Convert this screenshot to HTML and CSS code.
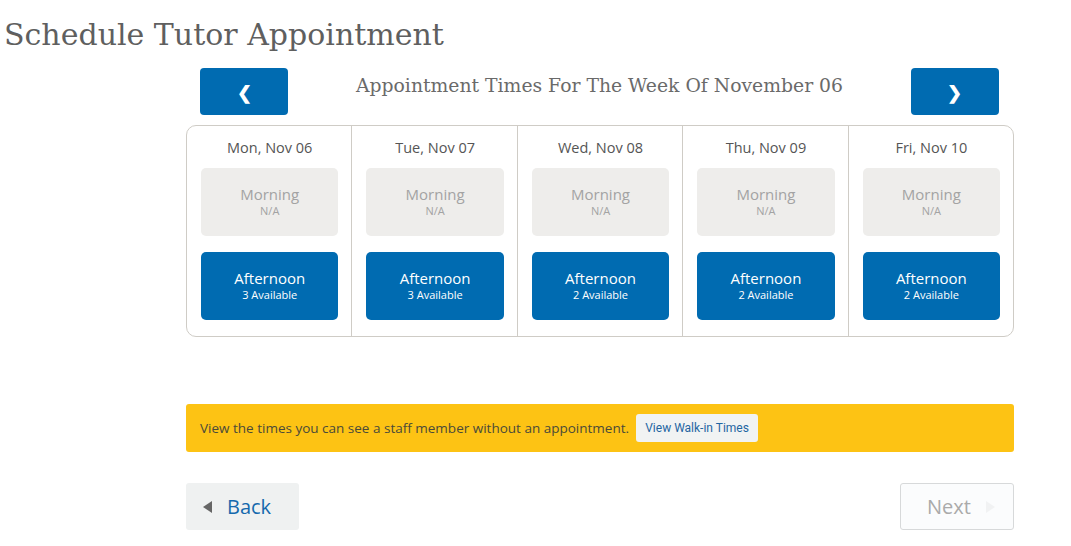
FILE: index.html
```html
<!DOCTYPE html>
<html>
<head>
<meta charset="utf-8">
<link rel="stylesheet" href="styles.css">
</head>
<body>
<h1 class="page-title">Schedule Tutor Appointment</h1>
<div class="content">
  <div class="week-nav">
    <button class="nav-btn" aria-label="Previous week">&#10094;</button>
    <h2 class="week-title">Appointment Times For The Week Of November 06</h2>
    <button class="nav-btn" aria-label="Next week">&#10095;</button>
  </div>
  <div class="calendar">
    <div class="day">
      <div class="day-name">Mon, Nov 06</div>
      <div class="slot slot-na"><span class="slot-name">Morning</span><span class="slot-sub">N/A</span></div>
      <div class="slot slot-open"><span class="slot-name">Afternoon</span><span class="slot-sub">3 Available</span></div>
    </div>
    <div class="day">
      <div class="day-name">Tue, Nov 07</div>
      <div class="slot slot-na"><span class="slot-name">Morning</span><span class="slot-sub">N/A</span></div>
      <div class="slot slot-open"><span class="slot-name">Afternoon</span><span class="slot-sub">3 Available</span></div>
    </div>
    <div class="day">
      <div class="day-name">Wed, Nov 08</div>
      <div class="slot slot-na"><span class="slot-name">Morning</span><span class="slot-sub">N/A</span></div>
      <div class="slot slot-open"><span class="slot-name">Afternoon</span><span class="slot-sub">2 Available</span></div>
    </div>
    <div class="day">
      <div class="day-name">Thu, Nov 09</div>
      <div class="slot slot-na"><span class="slot-name">Morning</span><span class="slot-sub">N/A</span></div>
      <div class="slot slot-open"><span class="slot-name">Afternoon</span><span class="slot-sub">2 Available</span></div>
    </div>
    <div class="day">
      <div class="day-name">Fri, Nov 10</div>
      <div class="slot slot-na"><span class="slot-name">Morning</span><span class="slot-sub">N/A</span></div>
      <div class="slot slot-open"><span class="slot-name">Afternoon</span><span class="slot-sub">2 Available</span></div>
    </div>
  </div>
  <div class="walkin">
    <span class="walkin-text">View the times you can see a staff member without an appointment.</span>
    <button class="walkin-btn">View Walk-in Times</button>
  </div>
  <div class="footer-nav">
    <button class="back-btn"><span class="tri tri-left"></span>Back</button>
    <button class="next-btn">Next<span class="tri tri-right"></span></button>
  </div>
</div>
</body>
</html>
```
FILE: styles.css
```css
* { box-sizing: border-box; }
body {
  margin: 0;
  font-family: "Open Sans", "Noto Sans", sans-serif;
  background: #fff;
  color: #555;
}
button { font-family: inherit; cursor: pointer; }
.page-title {
  margin: 0;
  padding: 13px 0 0 4px;
  height: 60px;
  font-family: "DejaVu Serif", serif;
  font-weight: 300;
  font-size: 30px;
  line-height: 44px;
  color: #5f5f5f;
}
.content {
  margin-left: 186px;
  width: 828px;
}
.week-nav {
  display: flex;
  align-items: flex-start;
  justify-content: space-between;
  padding: 8px 15px 0 14px;
  height: 65px;
}
.nav-btn {
  width: 88px;
  height: 47px;
  border: none;
  border-radius: 4px;
  background: #006bb1;
  color: #fff;
  font-size: 18px;
  font-weight: 700;
  padding: 0;
}
.week-title {
  margin: 4px 0 0;
  font-family: "DejaVu Serif", serif;
  font-weight: 400;
  font-size: 18.8px;
  line-height: 28px;
  color: #6a6a6a;
}
.calendar {
  display: flex;
  border: 1px solid #cfccc6;
  border-radius: 10px;
}
.day {
  flex: 1;
  padding: 12px 13px 16px 14px;
  border-left: 1px solid #cfccc6;
}
.day:first-child { border-left: none; }
.day-name {
  text-align: center;
  font-size: 14.5px;
  line-height: 20px;
  color: #555;
  margin-bottom: 10px;
}
.slot {
  height: 68px;
  border-radius: 5px;
  display: flex;
  flex-direction: column;
  align-items: center;
  justify-content: center;
}
.slot-na {
  background: #eeedeb;
  color: #a3a3a3;
  margin-bottom: 16px;
}
.slot-open {
  background: #006bb1;
  color: #fff;
}
.slot-name { font-size: 15px; line-height: 17px; }
.slot-sub { font-size: 11px; line-height: 15px; }
.walkin {
  margin-top: 67px;
  height: 48px;
  background: #fdc314;
  border-radius: 3px;
  display: flex;
  align-items: center;
  padding-left: 14px;
}
.walkin-text {
  font-size: 13.5px;
  color: #4a4a3a;
}
.walkin-btn {
  margin-left: 7px;
  width: 122px;
  height: 28px;
  border: none;
  border-radius: 3px;
  background: #f1f3f3;
  color: #1f66a2;
  font-family: Roboto, sans-serif;
  font-size: 12px;
  padding: 0;
}
.footer-nav {
  display: flex;
  justify-content: space-between;
  margin-top: 31px;
}
.back-btn, .next-btn {
  height: 47px;
  display: flex;
  align-items: center;
  font-size: 20px;
  border-radius: 3px;
  padding: 0;
}
.back-btn {
  width: 113px;
  border: none;
  background: #eff1f1;
  color: #1569ad;
  padding-left: 17px;
}
.next-btn {
  width: 114px;
  border: 1px solid #d7d9da;
  background: #fbfcfd;
  color: #aaa;
  padding-left: 26px;
}
.tri {
  width: 0;
  height: 0;
  border-top: 6px solid transparent;
  border-bottom: 6px solid transparent;
}
.tri-left {
  border-right: 9px solid #666;
  margin-right: 15px;
}
.tri-right {
  border-left: 9px solid #f1f2f3;
  margin-left: 15px;
}
```
